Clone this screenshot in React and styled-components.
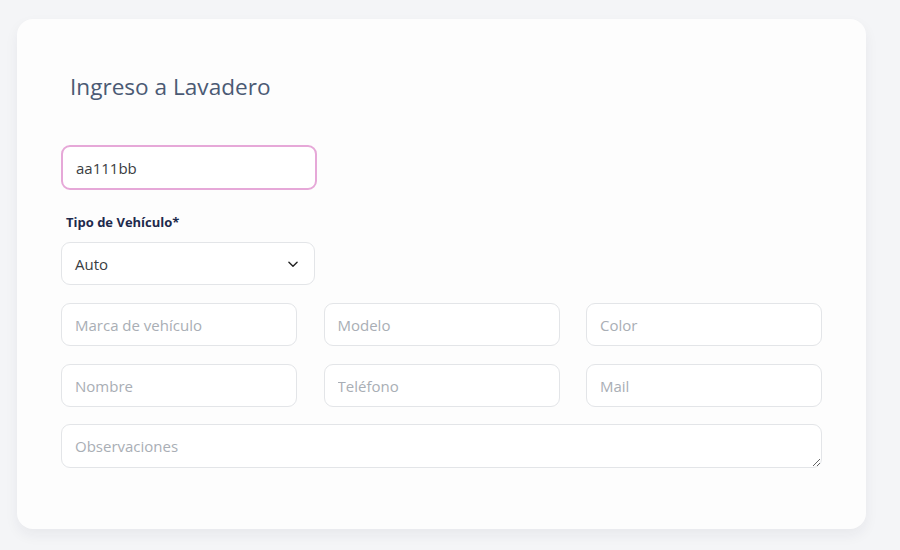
import styled, { createGlobalStyle } from "styled-components";

const Global = createGlobalStyle`
  body {
    margin: 0;
    background: #f4f5f7;
    font-family: "Open Sans", "Noto Sans", sans-serif;
  }
`;

const Page = styled.div`
  padding: 19px 34px 22px 17px;
`;

const Card = styled.div`
  background: #fdfdfd;
  border-radius: 16px;
  box-shadow: 0 6px 14px rgba(30, 40, 60, 0.06);
  padding: 53px 44px 61px;
  display: flex;
  flex-direction: column;
`;

const Title = styled.h2`
  margin: 0 0 43px 9px;
  font-size: 22.6px;
  line-height: 30px;
  font-weight: 400;
  color: #4b5a74;
`;

const Field = styled.input`
  box-sizing: border-box;
  width: ${(p) => p.$width || "100%"};
  height: ${(p) => p.$height || "43px"};
  padding: 0 13px;
  font-family: inherit;
  font-size: 15px;
  color: #3a3d42;
  background: #fff;
  border: ${(p) => (p.$active ? "2px solid #e6a8d8" : "1px solid #e3e5e8")};
  border-radius: 9px;
  outline: none;
  &::placeholder {
    color: #a9aeb5;
  }
`;

const Label = styled.label`
  margin: 23px 0 11px 5px;
  font-size: 13px;
  line-height: 18px;
  font-weight: 700;
  color: #1d2a4c;
`;

const SelectBox = styled.div`
  box-sizing: border-box;
  width: 254px;
  height: 43px;
  display: flex;
  align-items: center;
  justify-content: space-between;
  padding: 0 14px 0 13px;
  border: 1px solid #e3e5e8;
  border-radius: 9px;
  background: #fff;
  font-size: 15px;
  color: #3a3d42;
`;

const Grid = styled.div`
  display: grid;
  grid-template-columns: repeat(3, 236px);
  column-gap: 26.5px;
  row-gap: 18px;
  margin-top: 18px;
`;

const Area = styled.textarea`
  box-sizing: border-box;
  width: 761px;
  height: 44px;
  margin-top: 17px;
  padding: 10px 13px;
  font-family: inherit;
  font-size: 15px;
  line-height: 22px;
  border: 1px solid #e3e5e8;
  border-radius: 9px;
  background: #fff;
  outline: none;
  &::placeholder {
    color: #a9aeb5;
  }
`;

const Chevron = () => (
  <svg width="14" height="14" viewBox="0 0 24 24" fill="none" stroke="#222" strokeWidth="2.4" strokeLinecap="round" strokeLinejoin="round">
    <path d="M5 9l7 7 7-7" />
  </svg>
);

export default function App() {
  return (
    <Page>
      <Global />
      <Card>
        <Title>Ingreso a Lavadero</Title>
        <Field $active $width="256px" $height="45px" defaultValue="aa111bb" />
        <Label>Tipo de Vehículo*</Label>
        <SelectBox>
          <span>Auto</span>
          <Chevron />
        </SelectBox>
        <Grid>
          <Field placeholder="Marca de vehículo" />
          <Field placeholder="Modelo" />
          <Field placeholder="Color" />
          <Field placeholder="Nombre" />
          <Field placeholder="Teléfono" />
          <Field placeholder="Mail" />
        </Grid>
        <Area placeholder="Observaciones" />
      </Card>
    </Page>
  );
}
